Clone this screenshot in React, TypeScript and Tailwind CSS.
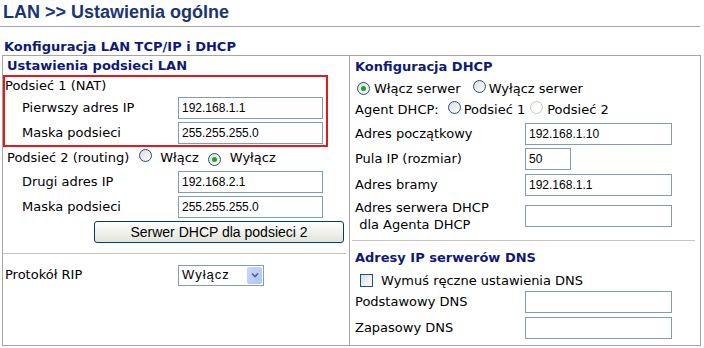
import type { ReactNode } from "react";

const label = "font-['Verdana','DejaVu_Sans',sans-serif] text-[13px] text-black";
const heading = "font-['Verdana','DejaVu_Sans',sans-serif] text-[13px] font-bold text-[#0d1a78]";
const inputCls =
  "h-[22px] border border-[#7f9db9] bg-white px-[3px] font-['Liberation_Sans',Arial,sans-serif] text-[12px] text-black outline-none";

function Radio({ checked = false, disabled = false }: { checked?: boolean; disabled?: boolean }) {
  return (
    <span
      className={
        "relative inline-flex h-[13px] w-[13px] shrink-0 items-center justify-center rounded-full border " +
        (disabled
          ? "border-[#cac8bb] bg-white"
          : "border-[#1c5180] bg-gradient-to-br from-[#dcdcd7] to-white")
      }
    >
      {checked ? <span className="h-[5px] w-[5px] rounded-full bg-[#21a121]" /> : null}
    </span>
  );
}

function Field({
  name,
  value = "",
  width = "w-[147px]",
  labelCls = "w-[175px] pl-[19px]",
  h = "h-[25px]",
}: {
  name: ReactNode;
  value?: string;
  width?: string;
  labelCls?: string;
  h?: string;
}) {
  return (
    <div className={`flex items-center ${h}`}>
      <div className={`shrink-0 ${labelCls} ${label}`}>{name}</div>
      <input readOnly value={value} className={`${inputCls} ${width}`} />
    </div>
  );
}

const rightLabel = "w-[175px] pl-[5px]";

export default function App() {
  return (
    <div className="h-[348px] w-[704px] overflow-hidden bg-white">
      <h1 className="h-[26px] pl-[3px] pt-[1px] font-['Liberation_Sans',Arial,sans-serif] text-[18px] font-bold leading-[22px] text-[#1b3574]">
        LAN &gt;&gt; Ustawienia ogólne
      </h1>
      <div className="mr-[4px] h-px bg-[#a5a5a5]" />
      <h2 className={`mt-[11px] h-[17px] pl-[4px] leading-[17px] ${heading}`}>
        Konfiguracja LAN TCP/IP i DHCP
      </h2>

      <div className="ml-[2px] grid h-[291px] w-[699px] grid-cols-[347px_1fr] border border-[#a5a5a5]">
        {/* left column */}
        <div className="flex flex-col border-r border-[#a5a5a5]">
          <div className={`flex h-[19px] items-center pl-[4px] ${heading}`}>Ustawienia podsieci LAN</div>
          <div className="h-[72px] w-[325px] border-[2px] border-[#e21a1a]">
            <div className={`flex h-[18px] items-center ${label}`}>Podsieć 1 (NAT)</div>
            <Field name="Pierwszy adres IP" value="192.168.1.1" width="w-[145px]" labelCls="w-[173px] pl-[17px]" />
            <Field name="Maska podsieci" value="255.255.255.0" width="w-[145px]" labelCls="w-[173px] pl-[17px]" />
          </div>
          <div className={`flex h-[22px] items-center pl-[4px] ${label}`}>
            <span>Podsieć 2 (routing)</span>
            <span className="ml-[10px]">
              <Radio />
            </span>
            <span className="ml-[8px]">Włącz</span>
            <span className="ml-[9px]">
              <Radio checked />
            </span>
            <span className="ml-[9px]">Wyłącz</span>
          </div>
          <Field name="Drugi adres IP" value="192.168.2.1" width="w-[145px]" />
          <Field name="Maska podsieci" value="255.255.255.0" width="w-[145px]" />
          <div className="flex h-[26px] items-center pl-[91px]">
            <button
              type="button"
              className="h-[22px] w-[250px] rounded-[3px] border border-[#003c74] bg-gradient-to-b from-white to-[#e3e3db] font-['Liberation_Sans',Arial,sans-serif] text-[14px] leading-[20px] text-black"
            >
              Serwer DHCP dla podsieci 2
            </button>
          </div>
          <div className="mt-[8px] h-px w-[343px] bg-[#c5c5c0]" />
          <div className="mt-[10px] flex h-[22px] items-center">
            <div className={`w-[175px] shrink-0 pl-[2px] ${label}`}>Protokół RIP</div>
            <div className="flex h-[21px] w-[86px] items-center justify-between border border-[#7f9db9] bg-white pl-[3px] pr-[1px]">
              <span className="font-['Liberation_Sans',Arial,sans-serif] text-[13px] tracking-[1px] text-black">Wyłącz</span>
              <span className="flex h-[17px] w-[15px] items-center justify-center rounded-[2px] bg-gradient-to-br from-[#c8d8fb] to-[#b0c4f4]">
                <svg width="8" height="6" viewBox="0 0 8 6">
                  <path d="M1 1.5 L4 4.5 L7 1.5" fill="none" stroke="#4d6185" strokeWidth="1.6" />
                </svg>
              </span>
            </div>
          </div>
        </div>

        {/* right column */}
        <div className="flex flex-col">
          <div className={`flex h-[22px] items-center pl-[5px] ${heading}`}>Konfiguracja DHCP</div>
          <div className={`flex h-[21px] items-center pl-[7px] ${label}`}>
            <Radio checked />
            <span className="ml-[4px]">Włącz serwer</span>
            <span className="ml-[12px]">
              <Radio />
            </span>
            <span className="ml-[3px]">Wyłącz serwer</span>
          </div>
          <div className={`flex h-[22px] items-center pl-[5px] ${label}`}>
            <span>Agent DHCP:</span>
            <span className="ml-[9px]">
              <Radio />
            </span>
            <span className="ml-[3px]">Podsieć 1</span>
            <span className="ml-[5px]">
              <Radio disabled />
            </span>
            <span className="ml-[4px]">Podsieć 2</span>
          </div>
          <Field name="Adres początkowy" value="192.168.1.10" labelCls={rightLabel} />
          <Field name="Pula IP (rozmiar)" value="50" width="w-[46px]" labelCls={rightLabel} h="h-[26px]" />
          <Field name="Adres bramy" value="192.168.1.1" labelCls={rightLabel} />
          <Field
            name={
              <span className="block leading-[17px]">
                Adres serwera DHCP
                <br />
                &nbsp;dla Agenta DHCP
              </span>
            }
            labelCls={rightLabel}
            h="h-[37px]"
          />
          <div className="ml-[2px] mt-[6px] h-px w-[343px] bg-[#c5c5c0]" />
          <div className={`mt-[3px] flex h-[28px] items-center pl-[5px] ${heading}`}>Adresy IP serwerów DNS</div>
          <div className={`flex h-[17px] items-center pl-[10px] ${label}`}>
            <span className="h-[13px] w-[13px] border border-[#1c5180] bg-gradient-to-br from-[#dcdcd7] to-white" />
            <span className="ml-[8px]">Wymuś ręczne ustawienia DNS</span>
          </div>
          <Field name="Podstawowy DNS" labelCls={rightLabel} h="h-[26px]" />
          <Field name="Zapasowy DNS" labelCls={rightLabel} h="h-[26px]" />
        </div>
      </div>
    </div>
  );
}
